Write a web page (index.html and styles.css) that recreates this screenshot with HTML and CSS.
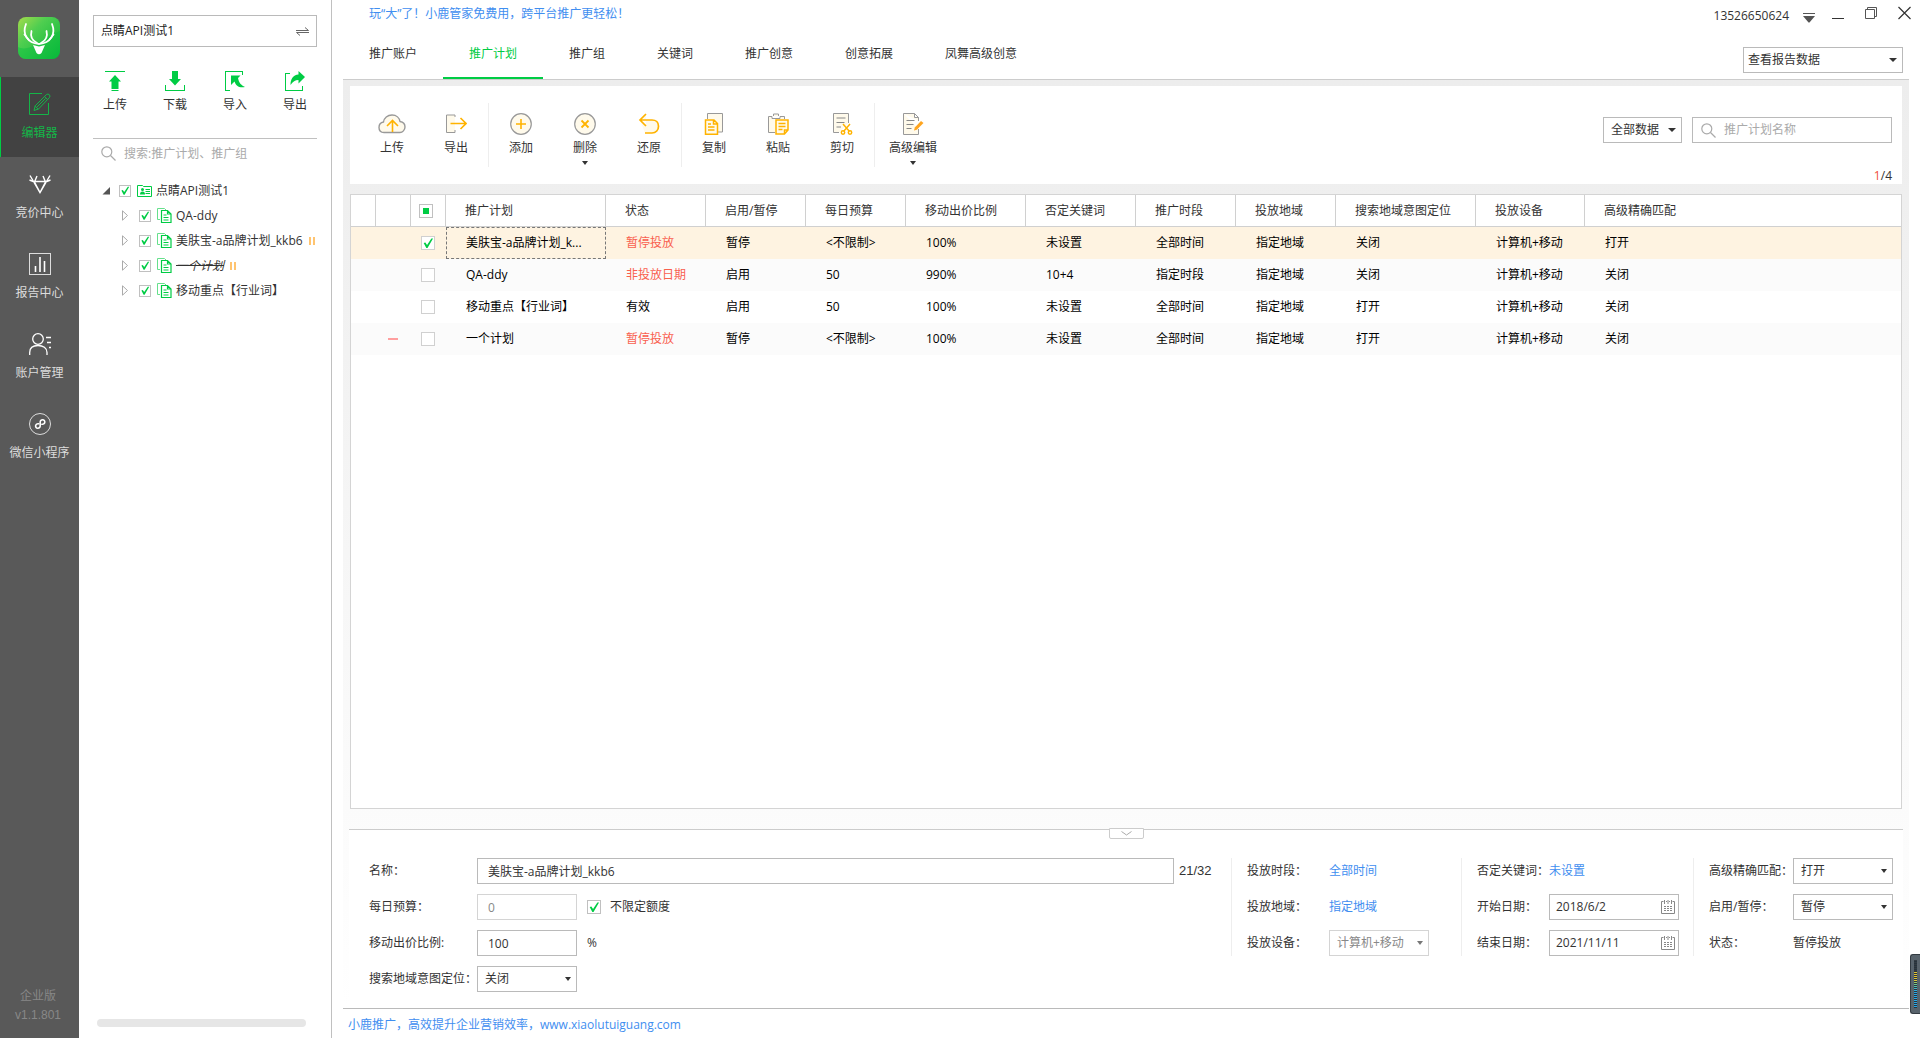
FILE: index.html
```html
<!DOCTYPE html>
<html lang="zh-CN">
<head>
<meta charset="utf-8">
<title>小鹿推广</title>
<link rel="stylesheet" href="styles.css">
</head>
<body>
<div class="app">

  <nav class="sidebar">
    <svg class="logo" width="42" height="42" viewBox="0 0 42 42">
      <defs>
        <linearGradient id="lg" x1="0" y1="0" x2="1" y2="1">
          <stop offset="0" stop-color="#a6dc4c"/>
          <stop offset=".35" stop-color="#4fce50"/>
          <stop offset="1" stop-color="#05b536"/>
        </linearGradient>
      </defs>
      <rect width="42" height="42" rx="8" fill="url(#lg)"/>
      <path d="M0 30 C12 36 22 22 42 14 V34 a8 8 0 0 1 -8 8 H8 a8 8 0 0 1 -8 -8z" fill="#0abf40" opacity=".45"/>
      <g fill="none" stroke="#fff" stroke-width="1.8" stroke-linecap="round">
        <path d="M8 7 C4 17 9 26 21 27 C33 26 38 17 34 7"/>
        <path d="M13.500 14 C12 20 15 24 19 26M28.500 14 C30 20 27 24 23 26M6.500 17.500 l4 5M35.500 17.500 l-4 5"/>
      </g>
      <path d="M15 28 L21 29.500 L27 28 L23.500 36 Q21 38.500 18.500 36z" fill="#fff"/>
    </svg>
    <a class="nav-item active" href="#">
      <svg width="22" height="22" viewBox="0 0 22 22" fill="none" stroke="currentColor">
        <path d="M13 .5H.5v21h19V10"/>
        <path d="M5 17.500l1.200-4.700L17.500 1.500q1.500-1 2.800.2t.2 2.800L9.500 16z M15.500 3.500l3 3M7.500 14.500l9-9M5.800 13l3.500 3.200"/>
      </svg>
      <span>编辑器</span>
    </a>
    <a class="nav-item" href="#">
      <svg width="22" height="22" viewBox="0 0 22 22" fill="none" stroke="#fff" stroke-width="1.400">
        <path d="M1 2.500L11 19.500 21 2.500M5 8.500h12M11 19.500L5.500 9 8 3M11 19.500L16.500 9 14 3M.5 7l5 2M21.500 7l-5 2"/>
      </svg>
      <span>竞价中心</span>
    </a>
    <a class="nav-item" href="#">
      <svg width="22" height="22" viewBox="0 0 22 22" fill="none" stroke="#ddd">
        <rect x=".5" y=".5" width="21" height="21"/>
        <path d="M6.500 19v-6M11 19V4M15.500 19V8" stroke="#fff" stroke-width="1.600"/>
      </svg>
      <span>报告中心</span>
    </a>
    <a class="nav-item" href="#">
      <svg width="22" height="22" viewBox="0 0 22 22" fill="none" stroke="#fff" stroke-width="1.300">
        <circle cx="9" cy="6" r="5.300"/>
        <path d="M.7 22v-2.500C.7 15 4 12.500 9 12.500s9 2.500 9 7V22M17 4.500h5M18 9.500h4M20 14.500h2"/>
      </svg>
      <span>账户管理</span>
    </a>
    <a class="nav-item" href="#">
      <svg width="22" height="22" viewBox="0 0 22 22" fill="none" stroke="#ddd">
        <circle cx="11" cy="11" r="10.500"/>
        <path d="M9.500 10.800a2.300 2.300 0 1 0 1.700 2.200V9a2.300 2.300 0 1 1 1.700 2.200" stroke="#fff" stroke-width="1.600" stroke-linecap="round"/>
      </svg>
      <span>微信小程序</span>
    </a>
    <div class="version">企业版<br><span>v1.1.801</span></div>
  </nav>

  <aside class="tree-panel">
    <button class="account">点睛API测试1
      <svg width="13" height="9" viewBox="0 0 13 9" fill="none" stroke="#666"><path d="M0 3.500h12.500L9 .5M13 5.500H.5L4 8.500"/></svg>
    </button>
    <div class="tree-tools">
      <button>
        <svg width="20" height="20" viewBox="0 0 20 20" fill="#00cc44"><path d="M0 0h20v1H0zM10 4l6 6.500h-2.500V18h-7v-7.500H4zM6.500 19h7v1h-7z"/></svg>
        上传
      </button>
      <button>
        <svg width="20" height="20" viewBox="0 0 20 20" fill="#00cc44"><path d="M7 0h6v8h3l-6 6.500L4 8h3zM0 14h1v5h18v-5h1v6H0z"/></svg>
        下载
      </button>
      <button>
        <svg width="20" height="20" viewBox="0 0 20 20" fill="#00cc44"><path d="M0 0h18v4h-1V1H1v18h4v1H0zM6 4.500h9.500L13 7c1 5 3 7 7 9-6 1-9-1-10.500-5.500L6 14z"/></svg>
        导入
      </button>
      <button>
        <svg width="20" height="20" viewBox="0 0 20 20" fill="#00cc44"><path d="M0 2h5v1H1v16h16v-4h1v5H0zM13.500 0L20 6l-6.500 6.500V9C10 9 8 10.500 5.500 14 5.500 8 8 4 13.500 3.500z"/></svg>
        导出
      </button>
    </div>
    <div class="tree-search">
      <svg width="15" height="15" viewBox="0 0 15 15" fill="none" stroke="#aaa" stroke-width="1.200"><circle cx="5.800" cy="5.800" r="5"/><path d="M9.500 9.500l5 5"/></svg>
      <input type="text" placeholder="搜索:推广计划、推广组" aria-label="搜索">
    </div>
    <svg class="defs" width="0" height="0">
      <symbol id="plan" viewBox="0 0 15 15">
        <path d="M3 11.500H.5V.5h7L9 2" fill="none" stroke="#66e08c"/>
        <path d="M4.500 2.500h6l3.500 3.500v8.500H4.500zM10.500 2.500V6H14M6.500 7h3M6.500 9.500h5M6.500 12h5" fill="none" stroke="#00cc44" stroke-width="1.200"/>
      </symbol>
    </svg>
    <ul class="tree">
      <li>
        <svg class="open" width="8" height="8" viewBox="0 0 8 8"><path d="M8 0v7.500H.5z" fill="#555"/></svg>
        <input type="checkbox" id="t0" checked>
        <svg width="15" height="12" viewBox="0 0 15 12"><path d="M.5 11.500V.5h5l1 1h8v10z" fill="none" stroke="#00cc44"/><path d="M8.500 4.500H13M8.500 6.500H13M8.500 8.500H13" stroke="#00cc44"/><circle cx="5.500" cy="4.500" r="1.500" fill="#00cc44"/><path d="M3 9.500q0-3 2.500-3T8 9.500z" fill="#00cc44"/></svg>
        <label for="t0">点睛API测试1</label>
      </li>
      <li class="child">
        <svg width="6" height="11" viewBox="0 0 6 11"><path d="M.5.800v9.400l5-4.700z" fill="none" stroke="#aaa"/></svg>
        <input type="checkbox" id="t1" checked>
        <svg width="15" height="15"><use href="#plan"/></svg>
        <label for="t1">QA-ddy</label>
      </li>
      <li class="child">
        <svg width="6" height="11" viewBox="0 0 6 11"><path d="M.5.800v9.400l5-4.700z" fill="none" stroke="#aaa"/></svg>
        <input type="checkbox" id="t2" checked>
        <svg width="15" height="15"><use href="#plan"/></svg>
        <label for="t2">美肤宝-a品牌计划_kkb6</label>
        <i class="pause"></i>
      </li>
      <li class="child">
        <svg width="6" height="11" viewBox="0 0 6 11"><path d="M.5.800v9.400l5-4.700z" fill="none" stroke="#aaa"/></svg>
        <input type="checkbox" id="t3" checked>
        <svg width="15" height="15"><use href="#plan"/></svg>
        <label class="deleted" for="t3">一个计划</label>
        <i class="pause"></i>
      </li>
      <li class="child">
        <svg width="6" height="11" viewBox="0 0 6 11"><path d="M.5.800v9.400l5-4.700z" fill="none" stroke="#aaa"/></svg>
        <input type="checkbox" id="t4" checked>
        <svg width="15" height="15"><use href="#plan"/></svg>
        <label for="t4">移动重点【行业词】</label>
      </li>
    </ul>
    <div class="hscroll"></div>
  </aside>

  <main class="main">
    <header class="titlebar">
      <a class="notice" href="#">玩“大”了！小鹿管家免费用，跨平台推广更轻松！</a>
      <span class="phone">13526650624</span>
      <div class="win-buttons">
        <button aria-label="菜单"><svg width="12" height="10" viewBox="0 0 12 10" fill="#555"><path d="M0 0h12v1H0zM0 3h12L6.500 9.500h-1z"/></svg></button>
        <button aria-label="最小化"><svg width="12" height="10" viewBox="0 0 12 10"><path d="M0 5.500h12" stroke="#333"/></svg></button>
        <button aria-label="还原"><svg width="12" height="18" viewBox="0 0 12 18" fill="none" stroke="#555"><path d="M.5 4.500h9v9h-9zM2.500 4.500v-2h9v9h-2"/></svg></button>
        <button aria-label="关闭"><svg width="13" height="18" viewBox="0 0 13 18" fill="none" stroke="#333" stroke-width="1.200"><path d="M.5 2l12 12M12.500 2L.5 14"/></svg></button>
      </div>
    </header>

    <div class="tabs">
      <a href="#">推广账户</a>
      <a href="#" class="active">推广计划</a>
      <a href="#">推广组</a>
      <a href="#">关键词</a>
      <a href="#">推广创意</a>
      <a href="#">创意拓展</a>
      <a href="#">凤舞高级创意</a>
      <span class="select report"><select aria-label="报告"><option>查看报告数据</option></select></span>
    </div>

    <div class="content">
      <section class="toolbar">
        <div class="group">
          <button>
            <svg width="28" height="22" viewBox="0 0 28 22" fill="none"><path d="M6 19.500C3 19.500 1 17.500 1 14.500S3 9.500 5.500 9C6 5 9.500 2 14 2s7.500 3 8 6.500c3 .5 5 2.500 5 5.500s-2.500 5.500-5 5.500z" fill="#fffaeb" stroke="#999" stroke-width="1.400"/><path d="M14.500 19V8M9 13l5.500-5.500L20 13" stroke="#ffb300" stroke-width="1.600"/></svg>
            上传
          </button>
          <button>
            <svg width="22" height="22" viewBox="0 0 22 22" fill="none"><path d="M10 4V2H1.500v17.500H10V17" fill="#fffaeb" stroke="#999"/><path d="M5.500 10.500H21M15.500 5l5.500 5.500-5.500 5.500" stroke="#ffb300" stroke-width="1.600"/></svg>
            导出
          </button>
        </div>
        <div class="group">
          <button>
            <svg width="22" height="22" viewBox="0 0 22 22" fill="none"><circle cx="11" cy="11" r="10.300" fill="#fffaeb" stroke="#999" stroke-width="1.200"/><path d="M6 11h10M11 6v10" stroke="#ffb300" stroke-width="1.600"/></svg>
            添加
          </button>
          <button class="more">
            <svg width="22" height="22" viewBox="0 0 22 22" fill="none"><circle cx="11" cy="11" r="10.300" fill="#fffaeb" stroke="#999" stroke-width="1.200"/><path d="M7.500 7.500l7 7M14.500 7.500l-7 7" stroke="#ffb300" stroke-width="1.800"/></svg>
            删除
          </button>
          <button>
            <svg width="22" height="22" viewBox="0 0 22 22" fill="none"><path d="M8 1L2 7l6 6M2 7h12c4 0 6.500 2.500 6.500 6.200S18 20 14 20H7" fill="#fffaeb" stroke="#ffb300" stroke-width="1.700"/></svg>
            还原
          </button>
        </div>
        <div class="group">
          <button>
            <svg width="22" height="22" viewBox="0 0 22 22" fill="none"><path d="M4.500 6V.5h15V19H15" fill="#fffaeb" stroke="#999"/><path d="M2.500 7h8.500l3.500 3.500v10.700h-12zM10.500 7v4H14M5 11h3M5 14h6.500M5 17h6.500" fill="#fffaeb" stroke="#ffb300" stroke-width="1.500"/></svg>
            复制
          </button>
          <button>
            <svg width="22" height="22" viewBox="0 0 22 22" fill="none"><path d="M8 19.500H1.500V3.500H5v2h8v-2h4.500V6M6.500 3V1h5v2" fill="#fffaeb" stroke="#999"/><path d="M9 7h12v10l-3.500 4H9zM21 17h-3.500v4M11.500 10.500h7M11.500 13.500h7M11.500 16.500h4" fill="#fffaeb" stroke="#ffb300" stroke-width="1.500"/></svg>
            粘贴
          </button>
          <button>
            <svg width="22" height="22" viewBox="0 0 22 22" fill="none"><path d="M8 19.500H2.500v-19h15V10" fill="#fffaeb" stroke="#999"/><path d="M5.500 5h9M5.500 9.500h8M5.500 14H10" stroke="#888"/><g stroke="#ffb300" stroke-width="1.500"><path d="M12 11l6.500 7.500M19 11l-6.500 7.500"/><circle cx="12" cy="19.500" r="1.700"/><circle cx="19" cy="19.500" r="1.700"/></g></svg>
            剪切
          </button>
        </div>
        <div class="group">
          <button class="more wide">
            <svg width="22" height="22" viewBox="0 0 22 22" fill="none"><path d="M1.500.5h11l4 4V8M16.500 16v5.500h-15V.5M12.500.5v4h4" fill="#fffaeb" stroke="#999"/><path d="M4.500 7.500h8M4.500 11.500h7M4.500 15.500h5" stroke="#888"/><path d="M12 17.500l.8-3L19 8l2.500 2-6.700 6.800z" fill="#ffa51f"/></svg>
            高级编辑
          </button>
        </div>
        <div class="filters">
          <div class="filter-row">
            <span class="select scope"><select aria-label="数据范围"><option>全部数据</option></select></span>
            <div class="search-box">
              <svg width="15" height="15" viewBox="0 0 15 15" fill="none" stroke="#aaa" stroke-width="1.200"><circle cx="5.800" cy="5.800" r="5"/><path d="M9.500 9.500l5 5"/></svg>
              <input type="text" placeholder="推广计划名称" aria-label="推广计划名称">
            </div>
          </div>
          <div class="count"><b>1</b>/4</div>
        </div>
      </section>

      <section class="grid">
        <table>
          <colgroup>
            <col class="w25"><col class="w35"><col class="w35"><col class="w160"><col class="w100"><col class="w100"><col class="w100"><col class="w120"><col class="w110"><col class="w100"><col class="w100"><col class="w140"><col class="w109"><col>
          </colgroup>
          <thead>
            <tr>
              <th></th><th></th><th class="check"><input type="checkbox" class="partial" aria-label="全选"></th>
              <th>推广计划</th><th>状态</th><th>启用/暂停</th><th>每日预算</th><th>移动出价比例</th><th>否定关键词</th><th>推广时段</th><th>投放地域</th><th>搜索地域意图定位</th><th>投放设备</th><th>高级精确匹配</th>
            </tr>
          </thead>
          <tbody>
            <tr class="selected">
              <td></td><td></td><td class="check"><input type="checkbox" aria-label="选择" checked></td>
              <td class="focus">美肤宝-a品牌计划_k...</td><td class="red">暂停投放</td><td>暂停</td><td>&lt;不限制&gt;</td><td>100%</td><td>未设置</td><td>全部时间</td><td>指定地域</td><td>关闭</td><td>计算机+移动</td><td>打开</td>
            </tr>
            <tr>
              <td></td><td></td><td class="check"><input type="checkbox" aria-label="选择"></td>
              <td>QA-ddy</td><td class="red">非投放日期</td><td>启用</td><td>50</td><td>990%</td><td>10+4</td><td>指定时段</td><td>指定地域</td><td>关闭</td><td>计算机+移动</td><td>关闭</td>
            </tr>
            <tr>
              <td></td><td></td><td class="check"><input type="checkbox" aria-label="选择"></td>
              <td>移动重点【行业词】</td><td>有效</td><td>启用</td><td>50</td><td>100%</td><td>未设置</td><td>全部时间</td><td>指定地域</td><td>打开</td><td>计算机+移动</td><td>关闭</td>
            </tr>
            <tr>
              <td></td><td class="mark"><i class="minus"></i></td><td class="check"><input type="checkbox" aria-label="选择"></td>
              <td>一个计划</td><td class="red">暂停投放</td><td>暂停</td><td>&lt;不限制&gt;</td><td>100%</td><td>未设置</td><td>全部时间</td><td>指定地域</td><td>打开</td><td>计算机+移动</td><td>关闭</td>
            </tr>
          </tbody>
        </table>
      </section>

      <form class="detail">
        <button type="button" class="handle" aria-label="收起"><svg width="11" height="5" viewBox="0 0 11 5" fill="none" stroke="#aaa"><path d="M.5.5l5 3.500 5-3.500"/></svg></button>
        <div class="col first">
          <label for="name">名称：</label>
          <div class="field"><input class="text grow" id="name" type="text" value="美肤宝-a品牌计划_kkb6"><span class="counter">21/32</span></div>
          <label for="budget">每日预算：</label>
          <div class="field"><input class="text" id="budget" type="text" value="0" disabled><input type="checkbox" id="nolimit" checked><label for="nolimit">不限定额度</label></div>
          <label for="ratio">移动出价比例:</label>
          <div class="field"><input class="text" id="ratio" type="text" value="100"><span class="unit">%</span></div>
          <label for="intent">搜索地域意图定位：</label>
          <div class="field"><span class="select w100"><select id="intent"><option>关闭</option></select></span></div>
        </div>
        <div class="col second">
          <span>投放时段：</span><a href="#">全部时间</a>
          <span>投放地域：</span><a href="#">指定地域</a>
          <label for="device">投放设备：</label>
          <span class="select w100 off"><select id="device" disabled><option>计算机+移动</option></select></span>
        </div>
        <div class="col third">
          <span>否定关键词：</span><a href="#">未设置</a>
          <label for="start">开始日期：</label>
          <div class="date"><input id="start" type="text" value="2018/6/2"><svg width="14" height="14" viewBox="0 0 14 14" fill="none" stroke="#888"><path d="M2.500 1.500h-2v12h13v-12h-2M3.500 0v4M7 0v4M10.500 0v4M5 1.500h1M8 1.500h1"/><path d="M3 6.500h8M3 8.500h8M3 10.500h8" stroke-dasharray="2 1"/></svg></div>
          <label for="end">结束日期：</label>
          <div class="date"><input id="end" type="text" value="2021/11/11"><svg width="14" height="14" viewBox="0 0 14 14" fill="none" stroke="#888"><path d="M2.500 1.500h-2v12h13v-12h-2M3.500 0v4M7 0v4M10.500 0v4M5 1.500h1M8 1.500h1"/><path d="M3 6.500h8M3 8.500h8M3 10.500h8" stroke-dasharray="2 1"/></svg></div>
        </div>
        <div class="col fourth">
          <label for="match">高级精确匹配：</label>
          <span class="select w100"><select id="match"><option>打开</option></select></span>
          <label for="onoff">启用/暂停：</label>
          <span class="select w100"><select id="onoff"><option>暂停</option></select></span>
          <span>状态：</span><span>暂停投放</span>
        </div>
      </form>
    </div>

    <footer class="footer"><a href="#">小鹿推广，高效提升企业营销效率，www.xiaolutuiguang.com</a></footer>
  </main>

  <div class="gauge"><i></i></div>
</div>
</body>
</html>
```
FILE: styles.css
```css
* {
  box-sizing: border-box;
}
body {
  margin: 0;
  font: 12px/18px "Open Sans", "Noto Sans CJK SC", sans-serif;
  color: #333;
  background: #fff;
}
button, input, select {
  font: inherit;
  color: inherit;
}
button {
  background: none;
  border: 0;
  padding: 0;
}
a {
  color: #3f8ef0;
  text-decoration: none;
}
svg {
  display: block;
  flex: none;
}
.app {
  display: flex;
  min-height: 100vh;
  position: relative;
}

/* checkboxes */
input[type="checkbox"] {
  appearance: none;
  flex: none;
  display: block;
  width: 14px;
  height: 14px;
  margin: 0;
  border: 1px solid #c0c0c0;
  background: #fff;
}
input[type="checkbox"]:checked::after {
  content: "";
  display: block;
  width: 100%;
  height: 100%;
  background: #00cc44;
  clip-path: polygon(14% 50%, 28% 46%, 42% 66%, 78% 12%, 92% 12%, 46% 92%, 36% 92%);
}
input.partial::after {
  content: "";
  display: block;
  width: 6px;
  height: 6px;
  margin: 3px;
  background: #00cc44;
}

/* drop-downs */
.select {
  position: relative;
  display: block;
  height: 26px;
}
.select select {
  appearance: none;
  display: block;
  width: 100%;
  height: 100%;
  padding: 0 7px;
  border: 1px solid #bababa;
  border-radius: 0;
  background: #fff;
}
.select::after {
  content: "";
  position: absolute;
  right: 6px;
  top: 11px;
  border: 3px solid transparent;
  border-top: 4px solid #333;
  border-bottom: 0;
}
.select.off select {
  border-color: #d4d4d4;
  color: #888;
  opacity: 1;
}
.select.off::after {
  border-top-color: #777;
}

/* dark sidebar */
.sidebar {
  flex: none;
  width: 79px;
  display: flex;
  flex-direction: column;
  background: #595959;
  color: #ddd;
}
.logo {
  margin: 17px 0 18px 18px;
}
.nav-item {
  display: flex;
  flex-direction: column;
  align-items: center;
  gap: 9px;
  height: 80px;
  padding-top: 16px;
  color: #ddd;
}
.nav-item.active {
  background: #424242;
  color: #14b548;
  box-shadow: inset 1px 0 0 #00cc44;
}
.version {
  margin-top: auto;
  padding: 0 3px 13px 0;
  line-height: 19px;
  text-align: center;
  color: #888;
}
.version span {
  font-family: "Liberation Sans", sans-serif;
}

/* account tree */
.tree-panel {
  flex: none;
  width: 253px;
  display: flex;
  flex-direction: column;
  padding: 15px 14px 11px;
  border-right: 1px solid #c0c0c0;
}
.account {
  display: flex;
  justify-content: space-between;
  align-items: center;
  height: 32px;
  padding: 0 7px;
  border: 1px solid #bababa;
  color: #222;
}
.tree-tools {
  display: flex;
  justify-content: space-between;
  margin-top: 24px;
  padding: 0 10px;
}
.tree-tools button {
  display: flex;
  flex-direction: column;
  align-items: center;
  gap: 5px;
}
.tree-search {
  display: flex;
  align-items: center;
  gap: 8px;
  margin-top: 24px;
  height: 30px;
  padding-left: 8px;
  border-top: 1px solid #c0c0c0;
}
.tree-search input, .search-box input {
  flex: 1;
  min-width: 0;
  padding: 0;
  border: 0;
  outline: 0;
  background: none;
}
::placeholder {
  color: #aaa;
  opacity: 1;
}
.defs {
  position: absolute;
}
.tree {
  list-style: none;
  margin: 10px 0 0;
  padding: 0;
  overflow: hidden;
}
.tree li {
  display: flex;
  align-items: center;
  height: 25px;
  padding-left: 9px;
  white-space: nowrap;
}
.tree li.child {
  padding-left: 29px;
}
.tree input[type="checkbox"] {
  width: 12px;
  height: 12px;
  margin: 0 6px 0 11px;
}
.tree .open + input[type="checkbox"] {
  margin-left: 9px;
}
.tree label {
  margin-left: 4px;
}
.deleted {
  font-style: italic;
  text-decoration: line-through;
}
.pause {
  flex: none;
  width: 6px;
  height: 8px;
  margin-left: 6px;
  border: solid #ffc470;
  border-width: 0 2px;
}
.hscroll {
  width: 209px;
  height: 8px;
  margin: auto 0 0 4px;
  border-radius: 4px;
  background: #e6e6e6;
}

/* main area */
.main {
  flex: 1;
  min-width: 0;
  display: flex;
  flex-direction: column;
  padding: 0 11px;
}
.titlebar {
  display: flex;
  align-items: flex-start;
  height: 28px;
  padding: 5px 0 0 26px;
}
.notice {
  flex: 1;
}
.phone {
  margin: 2px 14px 0 0;
}
.win-buttons {
  display: flex;
  gap: 17px;
  margin-right: -2px;
}
.win-buttons button {
  height: 20px;
  padding-top: 6px;
}
.win-buttons button:nth-child(n+3) {
  padding: 0 0 2px 4px;
}
.tabs {
  display: flex;
  height: 52px;
  border-bottom: 1px solid #ccc;
}
.tabs a {
  padding: 0 26px;
  line-height: 51px;
  color: #333;
}
.tabs a.active {
  color: #00cc44;
  border-bottom: 2px solid #00cc44;
}
.report {
  width: 160px;
  margin: 19px 6px 0 auto;
}
.report select {
  padding: 0 4px;
}
.report::after, .scope::after {
  border-width: 4px 4px 0;
}
.content {
  flex: 1;
  display: flex;
  flex-direction: column;
  padding: 6px 6px 0;
  background: linear-gradient(#ededed, #efefef 120px, #fff);
}
.toolbar {
  display: flex;
  height: 98px;
  margin: 0 1px;
  padding: 17px 10px 0;
  background: #fff;
}
.group {
  display: flex;
  height: 64px;
}
.group + .group {
  border-left: 1px solid #eee;
}
.toolbar button {
  display: flex;
  flex-direction: column;
  align-items: center;
  gap: 4px;
  width: 64px;
  padding-top: 10px;
}
.toolbar button.wide {
  width: 76px;
}
.more::after {
  content: "";
  border: 3px solid transparent;
  border-top: 4px solid #333;
  border-bottom: 0;
}
.filters {
  display: flex;
  flex-direction: column;
  justify-content: space-between;
  margin-left: auto;
  padding-top: 14px;
}
.filter-row {
  display: flex;
  gap: 10px;
}
.scope {
  width: 79px;
}
.search-box {
  display: flex;
  align-items: center;
  gap: 8px;
  width: 200px;
  height: 26px;
  padding: 0 8px;
  border: 1px solid #bababa;
}
.count {
  line-height: 16px;
  text-align: right;
}
.count b {
  font-weight: normal;
  color: #f0503c;
}

/* plan table */
.grid {
  flex: 1;
  margin: 10px 1px 20px;
  border: 1px solid #d4d4d4;
  background: #fff;
}
table {
  width: 100%;
  table-layout: fixed;
  border-collapse: separate;
  border-spacing: 0;
}
.w25 { width: 25px; }
.w35 { width: 35px; }
.w100 { width: 100px; }
.w109 { width: 109px; }
.w110 { width: 110px; }
.w120 { width: 120px; }
.w140 { width: 140px; }
.w160 { width: 160px; }
th, td {
  height: 32px;
  padding: 0 0 0 19px;
  text-align: left;
  font-weight: normal;
  white-space: nowrap;
}
th {
  border-right: 1px solid #d0d0d0;
  border-bottom: 1px solid #d0d0d0;
}
th:last-child {
  border-right: 0;
}
td {
  padding-left: 20px;
  color: #000;
}
th.check {
  padding-left: 8px;
}
td.check {
  padding-left: 10px;
}
td.check input {
  border-color: #d0d0d0;
}
td.mark {
  padding-left: 12px;
}
tbody tr:nth-child(even) {
  background: #fbfbfb;
}
tbody tr.selected {
  background: #fef3e1;
}
td.red {
  color: #f9604f;
}
td.focus {
  outline: 1px dashed #777;
  outline-offset: -1px;
}
.minus {
  display: block;
  width: 10px;
  height: 2px;
  background: #ff9f9f;
}

/* detail form */
.detail {
  position: relative;
  display: flex;
  align-items: flex-start;
  padding: 28px 0 16px 20px;
  border-top: 1px solid #ccc;
  background: #fff;
}
.handle {
  position: absolute;
  left: 50%;
  top: -2px;
  width: 35px;
  height: 11px;
  margin-left: -17px;
  padding-left: 11px;
  border: 1px solid #ccc;
  border-radius: 0 0 2px 2px;
  background: #fff;
}
.col {
  display: grid;
  grid-auto-rows: 26px;
  row-gap: 10px;
  align-items: center;
}
.col + .col {
  padding-left: 15px;
  border-left: 1px solid #eee;
}
.first {
  flex: 1;
  grid-template-columns: 108px 1fr;
}
.second {
  width: 230px;
  grid-template-columns: 82px 100px;
}
.third {
  width: 232px;
  grid-template-columns: 72px 130px;
}
.fourth {
  width: 210px;
  grid-template-columns: 84px 100px;
}
.col label, .col span {
  white-space: nowrap;
}
.field {
  display: flex;
  align-items: center;
}
.text {
  width: 100px;
  height: 26px;
  padding: 0 10px;
  border: 1px solid #bababa;
}
.text.grow {
  flex: 1;
}
.text:disabled {
  border-color: #d4d4d4;
  background: #fff;
  color: #888;
}
.counter {
  width: 57px;
  padding-left: 5px;
  font: 13px/18px "Liberation Sans", sans-serif;
}
.field input[type="checkbox"] {
  margin: 0 9px 0 10px;
}
.unit {
  margin-left: 10px;
}
.date {
  display: flex;
  align-items: center;
  height: 26px;
  padding: 0 3px 0 6px;
  border: 1px solid #bababa;
}
.date input {
  flex: 1;
  min-width: 0;
  padding: 0;
  border: 0;
}
.footer {
  height: 30px;
  padding: 7px 5px 0;
  border-top: 1px solid #bababa;
}

/* level meter docked to the right edge */
.gauge {
  position: absolute;
  right: 0;
  bottom: 24px;
  width: 10px;
  height: 60px;
  padding: 5px 3px;
  border: 1px solid #333b42;
  border-right: 0;
  border-radius: 3px 0 0 3px;
  background: #58636c;
}
.gauge i {
  display: block;
  height: 100%;
  background:
    repeating-linear-gradient(transparent 0 1px, #26323c 1px 2px),
    linear-gradient(#333b42 25%, #e3c530 25% 42%, #6fcf8a 50%, #27a9e8 65%);
}
```
